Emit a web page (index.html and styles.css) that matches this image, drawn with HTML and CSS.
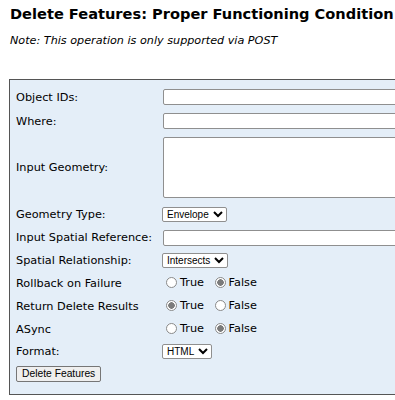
FILE: index.html
```html
<!DOCTYPE html>
<html lang="en">
<head>
    <meta charset="UTF-8">
    <title>Delete Features: Proper Functioning Condition</title>
    <link rel="stylesheet" href="styles.css">
</head>
<body>
<div class="page">
    <h2>Delete Features: Proper Functioning Condition</h2>
    <p class="note"><i>Note: This operation is only supported via POST</i></p>

    <form action="deleteFeatures" method="post">
        <table class="formTable">
            <tr class="h24">
                <td><label for="objectIds">Object IDs:</label></td>
                <td><input type="text" id="objectIds" name="objectIds" class="wide"></td>
            </tr>
            <tr class="h24">
                <td><label for="where">Where:</label></td>
                <td><input type="text" id="where" name="where" class="wide"></td>
            </tr>
            <tr class="tall">
                <td><label for="geometry">Input Geometry:</label></td>
                <td><textarea id="geometry" name="geometry"></textarea></td>
            </tr>
            <tr class="h24">
                <td><label for="geometryType">Geometry Type:</label></td>
                <td>
                    <select id="geometryType" name="geometryType">
                        <option>Envelope</option>
                        <option>Point</option>
                        <option>Polyline</option>
                        <option>Polygon</option>
                        <option>Multipoint</option>
                    </select>
                </td>
            </tr>
            <tr class="h23">
                <td><label for="inSR">Input Spatial Reference:</label></td>
                <td><input type="text" id="inSR" name="inSR" class="wide"></td>
            </tr>
            <tr class="h23">
                <td><label for="spatialRel">Spatial Relationship:</label></td>
                <td>
                    <select id="spatialRel" name="spatialRel">
                        <option>Intersects</option>
                        <option>Contains</option>
                        <option>Crosses</option>
                        <option>Within</option>
                    </select>
                </td>
            </tr>
            <tr class="h23">
                <td>Rollback on Failure</td>
                <td>
                    <label class="opt"><input type="radio" name="rollbackOnFailure" value="true">True</label>
                    <label class="opt"><input type="radio" name="rollbackOnFailure" value="false" checked>False</label>
                </td>
            </tr>
            <tr class="h23">
                <td>Return Delete Results</td>
                <td>
                    <label class="opt"><input type="radio" name="returnDeleteResults" value="true" checked>True</label>
                    <label class="opt"><input type="radio" name="returnDeleteResults" value="false">False</label>
                </td>
            </tr>
            <tr>
                <td>ASync</td>
                <td>
                    <label class="opt"><input type="radio" name="async" value="true">True</label>
                    <label class="opt"><input type="radio" name="async" value="false" checked>False</label>
                </td>
            </tr>
            <tr>
                <td><label for="f">Format:</label></td>
                <td>
                    <select id="f" name="f">
                        <option>HTML</option>
                        <option>JSON</option>
                    </select>
                </td>
            </tr>
            <tr class="h23">
                <td colspan="2"><input type="submit" value="Delete Features" class="btn"></td>
            </tr>
        </table>
    </form>
</div>
</body>
</html>
```

FILE: styles.css
```css
body {
    margin: 0;
    font-family: "DejaVu Sans", Verdana, sans-serif;
    font-size: 11.3px;
    color: #000;
    background: #fff;
}
.page {
    width: 395px;
    height: 400px;
    padding: 0 0 0 9px;
    box-sizing: border-box;
    overflow: hidden;
}
h2 {
    font-size: 14.6px;
    font-weight: bold;
    margin: 5px 0 0 1px;
    white-space: nowrap;
}
.note {
    font-size: 11.2px;
    margin: 12px 0 0 1px;
}
form {
    margin-top: 32px;
}
.formTable {
    width: 560px;
    min-width: 560px;
    background-color: #e4eef8;
    border: 1px solid #555;
    border-spacing: 0;
    padding: 5px 6px 9px 6px;
}
.formTable td {
    height: 22px;
    padding: 0;
    white-space: nowrap;
    vertical-align: middle;
}
.formTable td:first-child {
    width: 147px;
}
.formTable .h24 td {
    height: 24px;
}
.formTable .h23 td {
    height: 23px;
}
.formTable .tall td {
    height: 69px;
}
.wide {
    display: block;
    width: 300px;
    height: 16px;
    padding: 0 2px;
    box-sizing: border-box;
    border: 1px solid #8f8f8f;
    border-radius: 2px;
    margin: 0;
}
textarea {
    width: 300px;
    height: 61px;
    margin: 0;
    border: 1px solid #8f8f8f;
    border-radius: 2px;
    box-sizing: border-box;
    display: block;
}
select {
    display: block;
    font-family: "Liberation Sans", Arial, sans-serif;
    font-size: 10px;
    height: 15px;
    padding: 0;
    margin: 0 0 0 -1px;
    border: 1px solid #8f8f8f;
    border-radius: 2px;
    background: #fff;
    color: #000;
}
.opt {
    display: inline-flex;
    align-items: center;
    margin-right: 4px;
}
input[type="radio"] {
    appearance: none;
    width: 11px;
    height: 11px;
    margin: 0 3px 0 3px;
    border: 1px solid #8a8a8a;
    border-radius: 50%;
    background: #fff;
}
input[type="radio"]:checked {
    background: radial-gradient(circle, #7b7b7b 0 3px, #fff 3.5px);
}
.btn {
    font-family: "Liberation Sans", Arial, sans-serif;
    font-size: 10.3px;
    height: 16px;
    padding: 0 5px;
    margin: 0;
    background: #efefef;
    border: 1px solid #767676;
    border-radius: 2px;
    color: #000;
}
```
